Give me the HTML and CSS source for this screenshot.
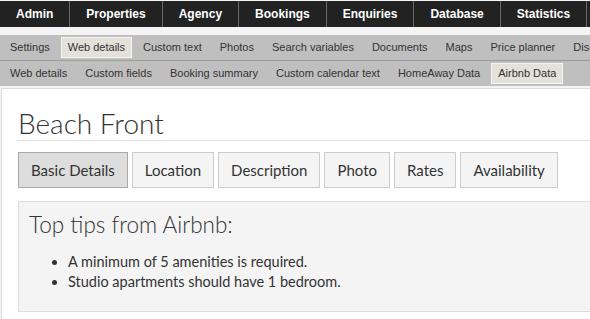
FILE: index.html
```html
<!DOCTYPE html>
<html>
<head>
<meta charset="utf-8">
<link rel="stylesheet" href="styles.css">
</head>
<body>
<nav class="topnav">
  <a class="top-item">Admin</a>
  <a class="top-item">Properties</a>
  <a class="top-item">Agency</a>
  <a class="top-item">Bookings</a>
  <a class="top-item">Enquiries</a>
  <a class="top-item">Database</a>
  <a class="top-item">Statistics</a>
  <a class="top-item">Reports</a>
</nav>
<div class="subnav">
  <div class="sub-row sub-row-first">
    <a class="sub-item">Settings</a>
    <a class="sub-item active">Web details</a>
    <a class="sub-item">Custom text</a>
    <a class="sub-item">Photos</a>
    <a class="sub-item">Search variables</a>
    <a class="sub-item">Documents</a>
    <a class="sub-item">Maps</a>
    <a class="sub-item">Price planner</a>
    <a class="sub-item">Discounts</a>
  </div>
  <div class="sub-row">
    <a class="sub-item">Web details</a>
    <a class="sub-item">Custom fields</a>
    <a class="sub-item">Booking summary</a>
    <a class="sub-item">Custom calendar text</a>
    <a class="sub-item">HomeAway Data</a>
    <a class="sub-item active">Airbnb Data</a>
  </div>
</div>
<main class="panel">
  <h1 class="title">Beach Front</h1>
  <div class="tabs">
    <a class="tab active">Basic Details</a>
    <a class="tab">Location</a>
    <a class="tab">Description</a>
    <a class="tab">Photo</a>
    <a class="tab">Rates</a>
    <a class="tab">Availability</a>
  </div>
  <section class="tips">
    <h2 class="tips-title">Top tips from Airbnb:</h2>
    <ul class="tips-list">
      <li>A minimum of 5 amenities is required.</li>
      <li>Studio apartments should have 1 bedroom.</li>
    </ul>
  </section>
</main>
</body>
</html>
```
FILE: styles.css
```css
html, body {
  margin: 0;
  padding: 0;
}
body {
  background: #f4f4f4;
  overflow: hidden;
  width: 590px;
  height: 319px;
}
.topnav {
  margin-top: 1px;
  height: 26px;
  background: #222222;
  display: flex;
  white-space: nowrap;
  overflow: hidden;
}
.top-item {
  flex: none;
  display: flex;
  align-items: center;
  padding: 0 16px;
  border-right: 1px solid #6a6a6a;
  color: #ffffff;
  font-family: "Liberation Sans", Arial, sans-serif;
  font-weight: bold;
  font-size: 12px;
}
.subnav {
  margin-top: 8px;
  background: #bfbfbf;
  font-family: "Liberation Sans", Arial, sans-serif;
  font-size: 11px;
  color: #333333;
}
.sub-row {
  display: flex;
  gap: 4px;
  height: 25px;
  align-items: center;
  padding-left: 3px;
  white-space: nowrap;
  overflow: hidden;
}
.sub-row-first {
  border-bottom: 1px solid #9a9a9a;
}
.sub-item {
  flex: none;
  height: 19px;
  line-height: 19px;
  padding: 0 6px;
  border: 1px solid transparent;
}
.sub-item.active {
  background: #e4e0da;
  border-color: #f6f6f6;
}
.panel {
  margin: 2px 0 0 1px;
  background: #ffffff;
  border: 1px solid #dddddd;
  border-right: none;
  padding: 0 0 20px 15px;
  font-family: Lato, "Open Sans", sans-serif;
  color: #333333;
}
.title {
  margin: 0;
  padding: 17px 0 0 1px;
  font-size: 28px;
  font-weight: 300;
  line-height: 34px;
  border-bottom: 1px solid #dddddd;
  color: #333333;
}
.tabs {
  display: flex;
  gap: 4px;
  margin-top: 11px;
  padding-left: 1px;
}
.tab {
  flex: none;
  height: 34px;
  line-height: 34px;
  padding: 0 12px;
  border: 1px solid #cccccc;
  background: #f4f4f4;
  font-size: 15px;
  color: #333333;
}
.tab.active {
  background: #dddddd;
  border-color: #aaaaaa;
}
.tips {
  margin: 13px 0 0 1px;
  height: 109px;
  background: #f4f4f4;
  border: 1px solid #dddddd;
  border-right: none;
  padding: 0 0 0 10px;
}
.tips-title {
  margin: 0;
  padding-top: 7px;
  font-size: 22.5px;
  font-weight: 300;
  line-height: 32px;
  color: #333333;
}
.tips-list {
  margin: 11px 0 0 0;
  padding-left: 39px;
  font-size: 14.5px;
  line-height: 20px;
}
```
